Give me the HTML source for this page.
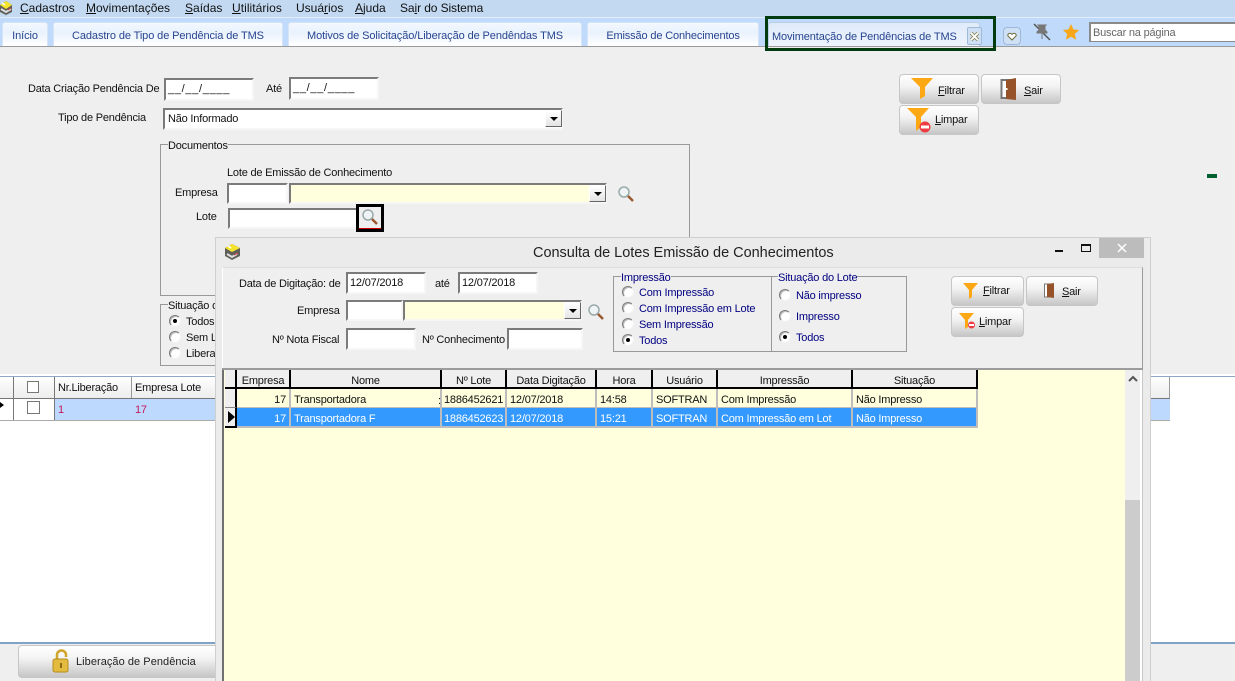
<!DOCTYPE html>
<html lang="pt-BR"><head><meta charset="utf-8"><title>Movimentação de Pendências de TMS</title>
<style>
html,body{margin:0;padding:0}
body{position:relative;width:1235px;height:681px;overflow:hidden;background:#efefef;font:11px/14px "Liberation Sans",sans-serif;color:#111;letter-spacing:-.2px}
div,span,svg{position:absolute;box-sizing:border-box}
.t{white-space:nowrap;height:14px;margin-top:1px}
u{text-decoration:underline}
.m{font-size:12px;top:0;color:#111;letter-spacing:0}
.tab{top:22px;height:24px;background:linear-gradient(#f4f8fe,#e9f2fd 40%,#fff);border:1px solid #d5e5f7;border-bottom:0;border-radius:3px 3px 0 0;color:#27458f;text-align:center;line-height:27px;white-space:nowrap;letter-spacing:-.1px}
.in{background:#fff;border-top:2px solid #7b7b7b;border-left:2px solid #7b7b7b;border-right:2px solid #f6f6f6;border-bottom:2px solid #f6f6f6}
.dd{background:linear-gradient(#fff,#e4e4e4);border:1px solid #fff;border-right:1px solid #666;border-bottom:1px solid #666;width:17px}
.dd:after{content:"";position:absolute;left:4px;top:6px;border:4px solid transparent;border-top:4px solid #000;border-bottom:0}
.btn{background:linear-gradient(#fff 0,#f3f3f3 40%,#c6c6c6 100%);border:1px solid #c6c6c6;border-radius:4px}
.r{width:12px;height:12px;border-radius:50%;background:#fff;border:1px solid;border-color:#7a7a7a #f2f2f2 #f2f2f2 #7a7a7a;box-shadow:inset 1px 1px 0 #bbb}
.r.on:after{content:"";position:absolute;left:3px;top:3px;width:4px;height:4px;border-radius:50%;background:#000}
.b{color:#000080}
.h{background:#efefef;border-right:2px solid #000;border-bottom:2px solid #000;text-align:center;line-height:23px;top:370px;height:19px;white-space:nowrap;overflow:hidden;color:#111}
.c{height:19px;line-height:23px;padding:0 3px;border-right:2px solid #bdbdbd;border-bottom:1px solid #bdbdbd;white-space:nowrap;overflow:hidden}
.y{top:389px;background:#ffffdd;color:#111}
.s{top:408px;background:#3399ff;color:#fff;border-bottom-width:2px;height:20px}
</style></head><body>

<!-- menu -->
<div style="left:0;top:0;width:1235px;height:17px;background:#c2d9f1"></div>
<div style="left:0;top:17px;width:1235px;height:1px;background:#e3eefa"></div>
<div style="left:0;top:18px;width:1235px;height:28px;background:#bfdafa"></div>
<div style="left:0;top:46px;width:1235px;height:1px;background:#9a9a9a"></div>
<svg style="left:0;top:0" width="14" height="16" viewBox="0 0 14 16"><path d="M0 5 6 1l6 4v7l-6 3-6-3z" fill="#5f5f5a"/><path d="M0 5 6 1l6 4-6 4z" fill="#f5e42c"/><path d="M2 3l3 2" stroke="#fff" stroke-width="1.500"/><path d="M1 9l5 3 5-3" stroke="#ddd" stroke-width="2" fill="none"/><path d="M8 10l3-2" stroke="#c44" /></svg>
<span class="t m" style="left:20px"><u>C</u>adastros</span>
<span class="t m" style="left:86px"><u>M</u>ovimentações</span>
<span class="t m" style="left:185px"><u>S</u>aídas</span>
<span class="t m" style="left:232px;letter-spacing:.05px"><u>U</u>tilitários</span>
<span class="t m" style="left:296px">Usuá<u>r</u>ios</span>
<span class="t m" style="left:355px"><u>A</u>juda</span>
<span class="t m" style="left:400px;letter-spacing:-.1px">Sa<u>i</u>r do Sistema</span>

<!-- tabs -->
<div class="tab" style="left:2px;width:46px">Início</div>
<div class="tab" style="left:53px;width:230px">Cadastro de Tipo de Pendência de TMS</div>
<div class="tab" style="left:288px;width:294px">Motivos de Solicitação/Liberação de Pendêndas TMS</div>
<div class="tab" style="left:587px;width:172px;letter-spacing:-.15px">Emissão de Conhecimentos</div>
<div style="left:765px;top:16px;width:231px;height:35px;border:3px solid #003c10"></div>
<div class="tab" style="left:768px;top:22px;width:212px;height:24px;background:linear-gradient(#dfeafa,#eef4fd);border-color:#b8cfe9;text-align:left;padding-left:3px;line-height:28px;letter-spacing:-.12px">Movimentação de Pendências de TMS</div>
<div style="left:967px;top:27px;width:15px;height:18px;background:#cfe0f5;border:1px solid #9fb9d8;border-radius:2px"></div>
<svg style="left:968px;top:30px" width="13" height="13" viewBox="0 0 13 13"><path d="M3 3l7 7M10 3l-7 7" stroke="#8a8a5a" stroke-width="3.500"/><path d="M3 3l7 7M10 3l-7 7" stroke="#fff" stroke-width="1.800"/></svg>
<div style="left:1003px;top:27px;width:18px;height:18px;background:#cfe0f5;border:1px solid #9fb9d8;border-radius:4px"></div>
<svg style="left:1007px;top:32px" width="10" height="9" viewBox="0 0 10 9"><path d="M5 8 1 4c-1-2 2-4 4-1.500C7 0 10 2 9 4z" fill="#fff" stroke="#6b6b3a"/></svg>
<svg style="left:1033px;top:23px" width="18" height="18" viewBox="0 0 18 18"><path d="M1 1l16 16" stroke="#555" stroke-width="1.500"/><path d="M5 2h8l-1 1v4l2 2v1H4V9l2-2V3zM9 10v6" fill="#777" stroke="#777"/></svg>
<svg style="left:1062px;top:23px" width="18" height="18" viewBox="0 0 18 18"><path d="M9 1l2.400 5.400 5.800.6-4.400 3.900 1.300 5.800L9 13.700l-5.100 3 1.300-5.800L.8 7l5.800-.6z" fill="#f8a71a"/></svg>
<div style="left:1089px;top:22px;width:146px;height:20px;background:#fff;border:1px solid #8a8a8a;border-right:0;border-top-width:2px;border-left-width:2px;color:#666;line-height:18px;padding-left:2px">Buscar na página</div>

<!-- main form -->
<span class="t" style="left:28px;top:81px">Data Criação Pendência De</span>
<div class="in" style="left:164px;top:78px;width:90px;height:23px;line-height:19px;padding-left:2px;letter-spacing:.7px">__/__/____</div>
<span class="t" style="left:266px;top:81px">Até</span>
<div class="in" style="left:289px;top:77px;width:90px;height:23px;line-height:19px;padding-left:2px;letter-spacing:.7px">__/__/____</div>
<span class="t" style="left:58px;top:110px">Tipo de Pendência</span>
<div class="in" style="left:163px;top:108px;width:400px;height:22px;line-height:19px;padding-left:3px">Não Informado</div>
<div class="dd" style="left:545px;top:110px;height:17px"></div>

<div style="left:899px;top:74px;width:80px;height:30px" class="btn"></div>
<svg style="left:911px;top:78px" width="22" height="22" viewBox="0 0 22 22"><path d="M0 0h22l-8 9v9l-5 3V9z" fill="#fca814"/></svg>
<span class="t" style="left:938px;top:83px"><u>F</u>iltrar</span>
<div style="left:981px;top:74px;width:80px;height:30px" class="btn"></div>
<svg style="left:1000px;top:77px" width="17" height="24" viewBox="0 0 17 24"><rect x="1.500" y="3" width="11" height="18" fill="#fff" stroke="#777" stroke-width="2"/><path d="M6 3l10-2v22l-10-1z" fill="#96532a"/><rect x="6" y="11" width="1.500" height="2" fill="#fff"/></svg>
<span class="t" style="left:1024px;top:83px"><u>S</u>air</span>
<div style="left:899px;top:105px;width:80px;height:30px" class="btn"></div>
<svg style="left:907px;top:108px" width="26" height="26" viewBox="0 0 26 26"><path d="M0 0h22l-8 9v10l-5 4V9z" fill="#fca814"/><circle cx="18" cy="19" r="5.500" fill="#ef3b42"/><rect x="14" y="17.500" width="8" height="3" fill="#fff"/></svg>
<span class="t" style="left:935px;top:112px"><u>L</u>impar</span>

<div style="left:160px;top:144px;width:530px;height:152px;border:1px solid #999"></div>
<span class="t" style="left:168px;top:138px;background:#efefef">Documentos</span>
<span class="t" style="left:227px;top:165px">Lote de Emissão de Conhecimento</span>
<span class="t" style="left:175px;top:185px">Empresa</span>
<div class="in" style="left:227px;top:183px;width:61px;height:21px"></div>
<div class="in" style="left:289px;top:183px;width:318px;height:21px;background:#ffffdd"></div>
<div class="dd" style="left:589px;top:185px;height:17px"></div>
<svg style="left:617px;top:185px" width="18" height="18" viewBox="0 0 18 18"><circle cx="7" cy="7" r="5" fill="#eef3f5" stroke="#9aa9a9" stroke-width="1.500"/><path d="M11 11l5 5" stroke="#9a5a30" stroke-width="2.500"/></svg>
<span class="t" style="left:196px;top:209px">Lote</span>
<div class="in" style="left:228px;top:208px;width:130px;height:21px"></div>
<div style="left:356px;top:204px;width:28px;height:28px;border:3px solid #000;background:#efefef"></div>
<div style="left:359px;top:228px;width:22px;height:1px;background:#c00"></div>
<svg style="left:361px;top:208px" width="18" height="18" viewBox="0 0 18 18"><circle cx="7" cy="7" r="5" fill="#eef3f5" stroke="#9aa9a9" stroke-width="1.500"/><path d="M11 11l5 5" stroke="#9a5a30" stroke-width="2.500"/></svg>

<div style="left:160px;top:304px;width:60px;height:62px;border:1px solid #999"></div>
<span class="t" style="left:168px;top:298px;background:#efefef">Situação d</span>
<div class="r on" style="left:169px;top:315px"></div><span class="t" style="left:186px;top:314px">Todos</span>
<div class="r" style="left:169px;top:331px"></div><span class="t" style="left:186px;top:330px">Sem L</span>
<div class="r" style="left:169px;top:347px"></div><span class="t" style="left:186px;top:346px">Libera</span>

<!-- background grid -->
<div style="left:0;top:374px;width:1235px;height:268px;background:#fff"></div>
<div style="left:0;top:376px;width:1235px;height:1px;background:#8ba9c4"></div>
<div style="left:0;top:642px;width:1235px;height:2px;background:#7ea3c6"></div>
<div style="left:0;top:377px;width:1170px;height:22px;background:linear-gradient(#fff,#ececec)"></div>
<div style="left:13px;top:377px;width:1px;height:43px;background:#777"></div>
<div style="left:54px;top:377px;width:1px;height:43px;background:#777"></div>
<div style="left:131px;top:377px;width:1px;height:43px;background:#999"></div>
<div style="left:1169px;top:377px;width:1px;height:43px;background:#999"></div>
<div style="left:0;top:398px;width:1170px;height:1px;background:#777"></div>
<div style="left:55px;top:399px;width:1115px;height:21px;background:#bddafe"></div>
<div style="left:0;top:420px;width:1170px;height:1px;background:#aaa"></div>
<div style="left:27px;top:381px;width:12px;height:12px;background:#fff;border:1px solid #777"></div>
<div style="left:27px;top:401px;width:13px;height:13px;background:#fff;border:1px solid #777"></div>
<div style="left:0;top:402px;border:3px solid transparent;border-left:4px solid #000"></div>
<span class="t" style="left:58px;top:380px">Nr.Liberação</span>
<span class="t" style="left:135px;top:380px">Empresa Lote</span>
<span class="t" style="left:58px;top:402px;color:#c2185b">1</span>
<span class="t" style="left:135px;top:402px;color:#c2185b">17</span>

<div style="left:18px;top:645px;width:205px;height:33px" class="btn"></div>
<svg style="left:52px;top:649px" width="18" height="24" viewBox="0 0 18 24"><path d="M5 11V6a4.500 4.500 0 0 1 9 0v2" fill="none" stroke="#d1a52a" stroke-width="2.500"/><rect x="1" y="10" width="15" height="13" rx="2" fill="#e3bb3f" stroke="#b58c1d"/><rect x="8" y="14" width="2" height="5" fill="#8a6a12"/></svg>
<span class="t" style="left:76px;top:654px;color:#222;letter-spacing:.05px">Liberação de Pendência</span>

<div style="left:1207px;top:174px;width:10px;height:4px;background:#006030"></div>

<!-- dialog -->
<div style="left:215px;top:237px;width:936px;height:444px;background:#ebebeb;border:1px solid #cfcfcf;border-bottom:0"></div>
<svg style="left:224px;top:243px" width="17" height="18" viewBox="0 0 17 18"><path d="M1 5l7-4 8 4v8l-8 4-7-4z" fill="#5f5f5a"/><path d="M1 5l7-4 8 4-8 4z" fill="#f5e42c"/><path d="M4 3l3 2" stroke="#fff" stroke-width="1.500"/><path d="M3 11l5 3 5-3" stroke="#ddd" stroke-width="2" fill="none"/><path d="M10 12l4-2" stroke="#c44"/></svg>
<span class="t" style="left:533px;top:244px;font-size:14.500px;line-height:16px;height:16px;color:#222;letter-spacing:-.02px">Consulta de Lotes Emissão de Conhecimentos</span>
<div style="left:1055px;top:250px;width:8px;height:2px;background:#111"></div>
<div style="left:1081px;top:244px;width:10px;height:8px;border:1px solid #111;border-top-width:2px"></div>
<div style="left:1099px;top:238px;width:45px;height:20px;background:#bcbcbc"></div>
<svg style="left:1117px;top:243px" width="10" height="10" viewBox="0 0 10 10"><path d="M1 1l8 8M9 1l-8 8" stroke="#fff" stroke-width="1.500"/></svg>

<div style="left:222px;top:267px;width:921px;height:103px;background:#efefef;border-top:1px solid #ddd;border-left:1px solid #fff;border-right:1px solid #9c9c9c"></div>
<span class="t" style="left:239px;top:276px">Data de Digitação: de</span>
<div class="in" style="left:346px;top:272px;width:80px;height:22px;line-height:19px;padding-left:2px">12/07/2018</div>
<span class="t" style="left:435px;top:276px">até</span>
<div class="in" style="left:458px;top:272px;width:80px;height:22px;line-height:19px;padding-left:2px">12/07/2018</div>
<span class="t" style="left:297px;top:303px">Empresa</span>
<div class="in" style="left:346px;top:300px;width:57px;height:21px"></div>
<div class="in" style="left:403px;top:300px;width:179px;height:21px;background:#ffffdd"></div>
<div class="dd" style="left:564px;top:302px;height:17px"></div>
<svg style="left:587px;top:303px" width="18" height="18" viewBox="0 0 18 18"><circle cx="7" cy="7" r="5" fill="#eef3f5" stroke="#9aa9a9" stroke-width="1.500"/><path d="M11 11l5 5" stroke="#9a5a30" stroke-width="2.500"/></svg>
<span class="t" style="left:272px;top:332px">Nº Nota Fiscal</span>
<div class="in" style="left:346px;top:328px;width:70px;height:22px"></div>
<span class="t" style="left:422px;top:332px">Nº Conhecimento</span>
<div class="in" style="left:507px;top:328px;width:76px;height:22px"></div>

<div style="left:613px;top:276px;width:159px;height:76px;border:1px solid #999"></div>
<div style="left:771px;top:276px;width:136px;height:76px;border:1px solid #999"></div>
<span class="t b" style="left:621px;top:270px;background:#efefef">Impressão</span>
<span class="t b" style="left:778px;top:270px;background:#efefef">Situação do Lote</span>
<div class="r" style="left:622px;top:286px"></div><span class="t b" style="left:639px;top:285px">Com Impressão</span>
<div class="r" style="left:622px;top:302px"></div><span class="t b" style="left:639px;top:301px">Com Impressão em Lote</span>
<div class="r" style="left:622px;top:318px"></div><span class="t b" style="left:639px;top:317px">Sem Impressão</span>
<div class="r on" style="left:622px;top:334px"></div><span class="t b" style="left:639px;top:333px">Todos</span>
<div class="r" style="left:779px;top:289px"></div><span class="t b" style="left:796px;top:288px">Não impresso</span>
<div class="r" style="left:779px;top:310px"></div><span class="t b" style="left:796px;top:309px">Impresso</span>
<div class="r on" style="left:779px;top:331px"></div><span class="t b" style="left:796px;top:330px">Todos</span>

<div style="left:951px;top:276px;width:73px;height:30px" class="btn"></div>
<svg style="left:963px;top:283px" width="15" height="16" viewBox="0 0 15 16"><path d="M0 0h15L9 7v7l-3 2V7z" fill="#fca814"/></svg>
<span class="t" style="left:983px;top:283px"><u>F</u>iltrar</span>
<div style="left:1026px;top:276px;width:72px;height:30px" class="btn"></div>
<svg style="left:1044px;top:283px" width="11" height="15" viewBox="0 0 11 15"><rect x=".5" y="1" width="8" height="13" fill="#fff" stroke="#777"/><path d="M3 1l7-1v15l-7-1z" fill="#96532a"/></svg>
<span class="t" style="left:1062px;top:284px"><u>S</u>air</span>
<div style="left:951px;top:307px;width:73px;height:30px" class="btn"></div>
<svg style="left:959px;top:313px" width="19" height="17" viewBox="0 0 19 17"><path d="M0 0h15L9 7v7l-3 2V7z" fill="#fca814"/><circle cx="12.500" cy="12" r="3.500" fill="#ef3b42"/><rect x="10" y="11" width="5" height="2" fill="#fff"/></svg>
<span class="t" style="left:979px;top:314px"><u>L</u>impar</span>

<!-- dialog grid -->
<div style="left:222px;top:368px;width:921px;height:2px;background:#9c9c9c"></div>
<div style="left:222px;top:370px;width:2px;height:311px;background:#707070"></div>
<div style="left:224px;top:370px;width:901px;height:311px;background:#ffffdd"></div>
<div style="left:1125px;top:370px;width:15px;height:311px;background:#efefef"></div>
<div style="left:1125px;top:500px;width:15px;height:181px;background:#ccc"></div>
<div style="left:1140px;top:370px;width:3px;height:311px;background:#fff"></div>
<div style="left:1142px;top:370px;width:1px;height:311px;background:#c8c8c8"></div>
<svg style="left:1128px;top:375px" width="10" height="8" viewBox="0 0 10 8"><path d="M1 6l4-4 4 4" fill="none" stroke="#555" stroke-width="2"/></svg>

<div class="h" style="left:225px;width:12px"></div>
<div class="h" style="left:237px;width:54px">Empresa</div>
<div class="h" style="left:291px;width:151px">Nome</div>
<div class="h" style="left:442px;width:65px">Nº Lote</div>
<div class="h" style="left:507px;width:90px">Data Digitação</div>
<div class="h" style="left:597px;width:56px">Hora</div>
<div class="h" style="left:653px;width:65px">Usuário</div>
<div class="h" style="left:718px;width:135px">Impressão</div>
<div class="h" style="left:853px;width:125px">Situação</div>

<div style="left:225px;top:389px;width:12px;height:19px;background:#efefef;border-right:2px solid #000;border-bottom:1px solid #888"></div>
<div style="left:225px;top:408px;width:12px;height:20px;background:#efefef;border-right:2px solid #000;border-bottom:2px solid #000"></div>
<div style="left:228px;top:411px;border:6px solid transparent;border-left:7px solid #000;border-right:0"></div>

<div class="c y" style="left:237px;width:54px;text-align:right">17</div>
<div class="c y" style="left:291px;width:151px">Transportadora</div>
<span class="t" style="left:438px;top:393px">:</span>
<div class="c y" style="left:442px;width:65px;padding:0 2px">1886452621</div>
<div class="c y" style="left:507px;width:90px">12/07/2018</div>
<div class="c y" style="left:597px;width:56px">14:58</div>
<div class="c y" style="left:653px;width:65px">SOFTRAN</div>
<div class="c y" style="left:718px;width:135px">Com Impressão</div>
<div class="c y" style="left:853px;width:125px">Não Impresso</div>

<div class="c s" style="left:237px;width:54px;text-align:right">17</div>
<div class="c s" style="left:291px;width:151px">Transportadora F</div>
<div class="c s" style="left:442px;width:65px;padding:0 2px">1886452623</div>
<div class="c s" style="left:507px;width:90px">12/07/2018</div>
<div class="c s" style="left:597px;width:56px">15:21</div>
<div class="c s" style="left:653px;width:65px">SOFTRAN</div>
<div class="c s" style="left:718px;width:135px">Com Impressão em Lot</div>
<div class="c s" style="left:853px;width:125px">Não Impresso</div>

</body></html>
